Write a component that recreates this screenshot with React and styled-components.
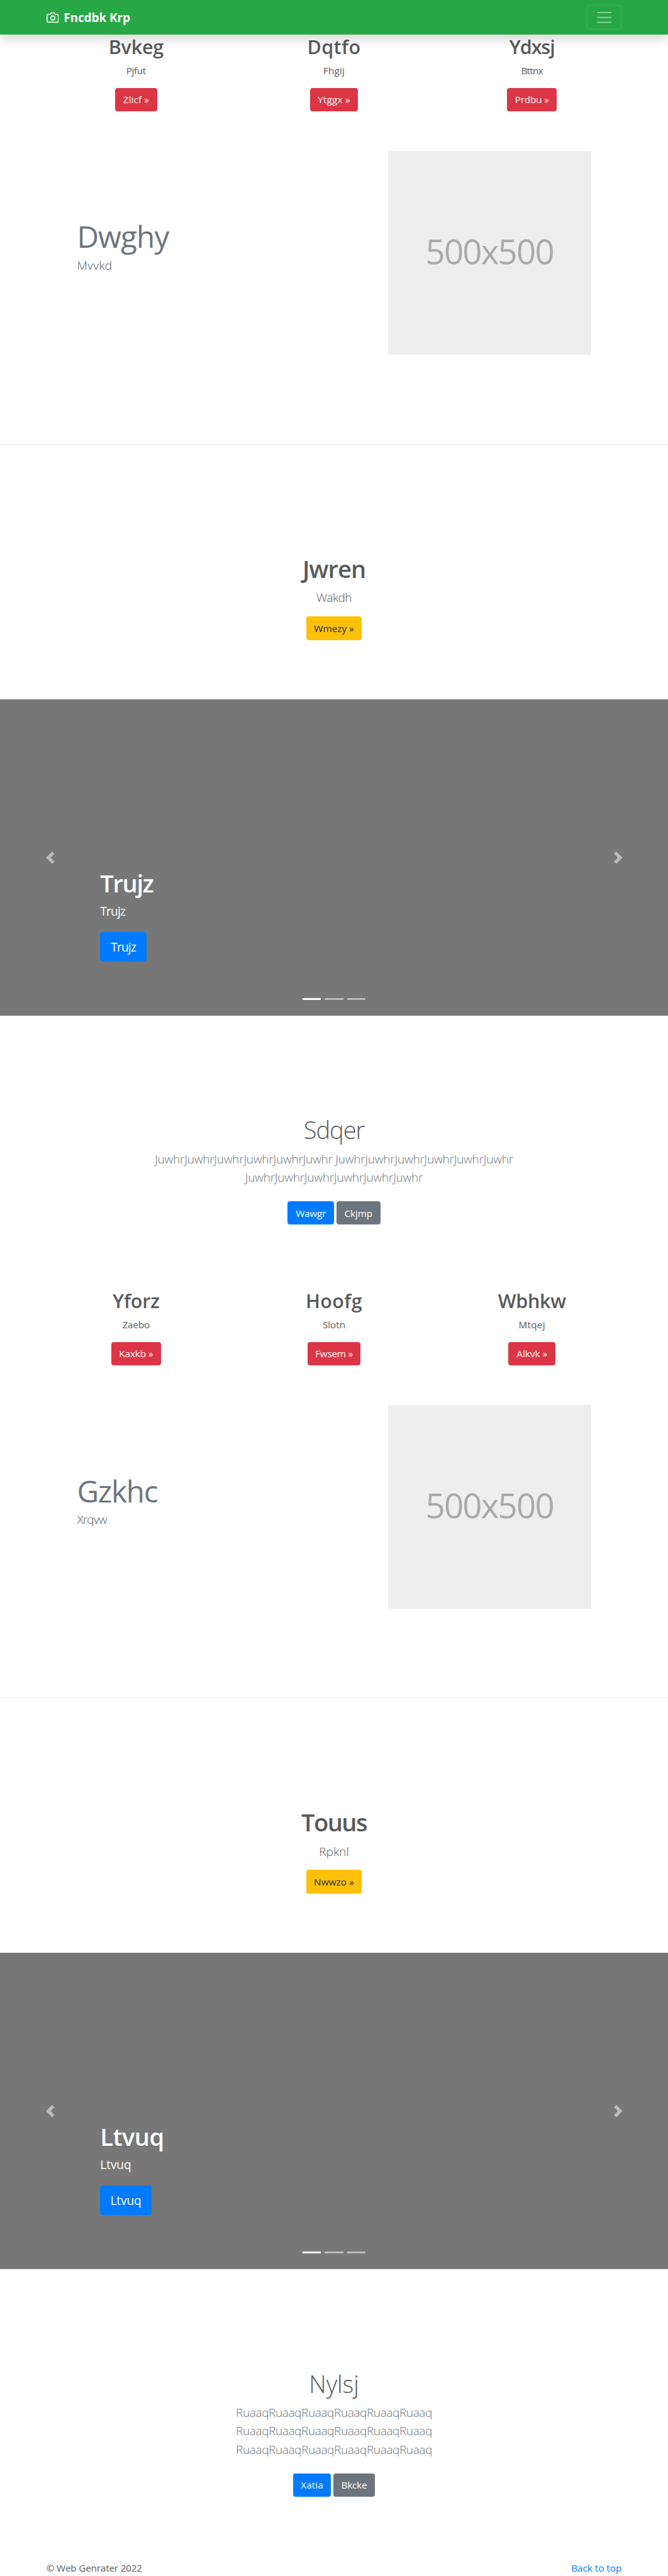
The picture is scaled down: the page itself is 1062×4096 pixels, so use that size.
import React from "react";
import styled, { createGlobalStyle, css } from "styled-components";

const SCALE = 0.983;
const u = (n) => `${+(n * SCALE).toFixed(3)}px`;

const colors = {
  text: "#5a5a5a",
  muted: "#6c757d",
  primary: "#007bff",
  secondary: "#6c757d",
  success: "#28a745",
  danger: "#dc3545",
  warning: "#ffc107",
};

const GlobalStyle = createGlobalStyle`
  *, *::before, *::after { box-sizing: border-box; }
  body {
    margin: 0;
    background: #fff;
    color: ${colors.text};
    font-family: "Open Sans", "Noto Sans", sans-serif;
  }
  h1, h2, p, hr { margin: 0; }
  a { text-decoration: none; color: inherit; }
`;

/* Type size with its line box; the glyphs sit slightly below the box centre. */
const type = (size, weight, lineHeight) => css`
  font-size: ${u(size * 0.97)};
  font-weight: ${weight};
  line-height: ${u(lineHeight)};
  height: ${u(lineHeight)};
  letter-spacing: ${(p) => u(p.$track || 0)};
  white-space: nowrap;
  padding-top: ${u(size * 0.04)};
`;

const Page = styled.div`
  width: 100%;
  height: 4096px;
  overflow: hidden;
  display: flex;
  flex-direction: column;

  & > * {
    flex-shrink: 0;
  }
`;

const Navbar = styled.header`
  position: relative;
  z-index: 2;
  display: flex;
  align-items: center;
  justify-content: space-between;
  height: ${u(56)};
  padding: 0 ${u(75)};
  background: ${colors.success};
  box-shadow: 0 ${u(8)} ${u(16)} rgba(0, 0, 0, 0.15);
`;

const Brand = styled.a`
  display: flex;
  align-items: center;
  gap: ${u(8)};
  color: #fff;
`;

const BrandName = styled.strong`
  ${type(20, 700, 30)}
`;

const CameraIcon = styled.svg`
  width: ${u(20)};
  height: ${u(20)};
  fill: none;
  stroke: #fff;
  stroke-width: 2;
  stroke-linecap: round;
  stroke-linejoin: round;
`;

const Toggler = styled.button`
  display: flex;
  align-items: center;
  justify-content: center;
  width: ${u(56)};
  height: ${u(40)};
  padding: 0;
  border: 1px solid rgba(255, 255, 255, 0.1);
  border-radius: ${u(4)};
  background: transparent;

  svg {
    width: ${u(30)};
    height: ${u(30)};
    stroke: rgba(255, 255, 255, 0.5);
    stroke-width: 2;
    stroke-linecap: round;
  }
`;

const Button = styled.a`
  display: block;
  width: ${(p) => u(p.$width)};
  height: ${u(38)};
  padding-top: ${u(7.6)};
  border-radius: ${u(4)};
  background: ${(p) => colors[p.$tone]};
  color: ${(p) => (p.$tone === "warning" ? "#212529" : "#fff")};
  font-size: ${u(15.6)};
  line-height: ${u(24)};
  letter-spacing: ${(p) => u(p.$track || 0)};
  text-align: center;
  white-space: nowrap;
`;

const LargeButton = styled(Button)`
  height: ${u(48)};
  padding-top: ${u(10.3)};
  border-radius: ${u(4.8)};
  font-size: ${u(19.4)};
  line-height: ${u(30)};
`;

const Columns = styled.section`
  display: flex;
  height: ${u(124.6)};
  margin-top: ${(p) => u(p.$offset)};
  padding: 0 ${u(60)};
`;

const Column = styled.div`
  flex: 1;
  display: flex;
  flex-direction: column;
  align-items: center;
`;

const ColumnTitle = styled.h2`
  ${type(32, 560, 38.4)}
  margin-bottom: ${u(8)};
`;

const ColumnText = styled.p`
  ${type(16, 400, 24)}
  margin-bottom: ${u(16)};
`;

const FeatureRow = styled.section`
  display: flex;
  justify-content: space-between;
  margin: ${u(64)} 0 ${u(144)};
  padding: 0 ${u(124.5)};
`;

const FeatureCopy = styled.div`
  padding-top: ${u(111.3)};
`;

const FeatureTitle = styled.h2`
  ${type(50, 400, 50)}
  margin-bottom: ${u(8)};
  color: ${colors.muted};
`;

const Lead = styled.p`
  ${type(20, 300, 30)}
  padding-top: ${u(1.7)};
`;

const Placeholder = styled.div`
  display: flex;
  align-items: center;
  justify-content: center;
  width: ${u(328.5)};
  height: ${(p) => u(p.$height)};
  padding-bottom: ${u(6)};
  background: #eee;
  color: #aaa;
  font-size: ${u(55.5)};
  line-height: 1;
  letter-spacing: ${u(-1.8)};
`;

const Divider = styled.hr`
  height: 1px;
  border: 0;
  background: rgba(0, 0, 0, 0.1);
`;

const Promo = styled.section`
  display: flex;
  flex-direction: column;
  align-items: center;
  height: ${u(412)};
  padding-top: ${u(175.7)};

  ${Lead} {
    margin: ${u(8)} 0 ${u(16.3)};
  }
`;

const DisplayTitle = styled.h1`
  ${(p) => (p.$light ? type(40, 300, 48) : type(40, 600, 48))}
`;

const Carousel = styled.section`
  position: relative;
  display: flex;
  align-items: center;
  justify-content: space-between;
  height: ${u(512)};
  padding: 0 ${u(71)};
  background: #777;
`;

const Arrow = styled.svg`
  width: ${u(20)};
  height: ${u(20)};
  fill: #fff;
  opacity: 0.5;
`;

const Caption = styled.div`
  position: absolute;
  left: 15%;
  bottom: ${u(88)};
  color: #fff;
`;

const CaptionText = styled.p`
  ${type(20, 400, 30)}
  margin: ${u(8)} 0 ${u(18)};
`;

const Indicators = styled.div`
  position: absolute;
  left: 0;
  right: 0;
  bottom: ${u(26)};
  display: flex;
  justify-content: center;
  gap: ${u(6)};
`;

const Indicator = styled.span`
  width: ${u(30)};
  height: 3px;
  background: #fff;
  opacity: ${(p) => (p.$active ? 1 : 0.5)};
`;

const Hero = styled.section`
  display: flex;
  flex-direction: column;
  align-items: center;
  padding-top: ${u(159.4)};
`;

const HeroText = styled.div`
  margin: ${u(8)} 0 ${u(24.6)};
  text-align: center;
  color: ${colors.muted};
`;

const ButtonGroup = styled.div`
  display: flex;
  gap: ${u(4)};
`;

const Footer = styled.footer`
  display: flex;
  justify-content: space-between;
  margin-top: ${u(103.4)};
  padding: 0 ${u(75)};
`;

const FooterText = styled.p`
  ${type(16, 400, 24)}
`;

const FooterLink = styled.a`
  ${type(16, 400, 24)}
  && {
    color: ${colors.primary};
  }
`;

const groups = [
  {
    offset: -0.4,
    columns: [
      { title: ["Bvkeg", -0.25], text: ["Pjfut", -0.35], button: ["Zlicf »", 0.1, 68] },
      { title: ["Dqtfo", 0.4], text: ["Fhgij", 0.15], button: ["Ytggx »", 0.2, 78] },
      { title: ["Ydxsj", -1.1], text: ["Bttnx", -0.7], button: ["Prdbu »", -0.2, 80] },
    ],
    feature: { title: ["Dwghy", -0.9], text: ["Mvvkd", 0.3], height: 330 },
    promo: { title: ["Jwren", -1], text: ["Wakdh", -0.6], button: ["Wmezy »", 0, 90] },
    slide: { title: ["Trujz", -1.4], text: ["Trujz", -0.8], width: 75 },
    hero: {
      title: ["Sdqer", -1.15],
      track: -0.27,
      lines: [
        "JuwhrJuwhrJuwhrJuwhrJuwhrJuwhr JuwhrJuwhrJuwhrJuwhrJuwhrJuwhr",
        "JuwhrJuwhrJuwhrJuwhrJuwhrJuwhr",
      ],
      primary: ["Wawgr", -0.3, 75],
      secondary: ["Ckjmp", -0.1, 71],
    },
  },
  {
    offset: 103.2,
    columns: [
      { title: ["Yforz", -0.2], text: ["Zaebo", -0.1], button: ["Kaxkb »", -0.15, 80] },
      { title: ["Hoofg", 0.35], text: ["Slotn", 0], button: ["Fwsem »", -0.25, 86] },
      { title: ["Wbhkw", -0.3], text: ["Mtqej", 0.3], button: ["Alkvk »", 0, 76] },
    ],
    feature: { title: ["Gzkhc", -1.25], text: ["Xrqvw", -0.85], height: 329 },
    promo: { title: ["Touus", -1.6], text: ["Rpknl", 0], button: ["Nwwzo »", 0.07, 90] },
    slide: { title: ["Ltvuq", -0.55], text: ["Ltvuq", -0.07], width: 83 },
    hero: {
      title: ["Nylsj", -0.15],
      track: -0.44,
      lines: [
        "RuaaqRuaaqRuaaqRuaaqRuaaqRuaaq",
        "RuaaqRuaaqRuaaqRuaaqRuaaqRuaaq",
        "RuaaqRuaaqRuaaqRuaaqRuaaqRuaaq",
      ],
      primary: ["Xatia", 0.05, 61],
      secondary: ["Bkcke", -0.25, 67],
    },
  },
];

function ActionButton({ tone, data }) {
  const [label, track, width] = data;
  return (
    <Button href="#" $tone={tone} $track={track} $width={width}>
      {label}
    </Button>
  );
}

function Group({ offset, columns, feature, promo, slide, hero }) {
  return (
    <>
      <Columns $offset={offset}>
        {columns.map(({ title, text, button }) => (
          <Column key={title[0]}>
            <ColumnTitle $track={title[1]}>{title[0]}</ColumnTitle>
            <ColumnText $track={text[1]}>{text[0]}</ColumnText>
            <ActionButton tone="danger" data={button} />
          </Column>
        ))}
      </Columns>

      <FeatureRow>
        <FeatureCopy>
          <FeatureTitle $track={feature.title[1]}>{feature.title[0]}</FeatureTitle>
          <Lead $track={feature.text[1]}>{feature.text[0]}</Lead>
        </FeatureCopy>
        <Placeholder $height={feature.height}>500x500</Placeholder>
      </FeatureRow>

      <Divider />

      <Promo>
        <DisplayTitle $track={promo.title[1]}>{promo.title[0]}</DisplayTitle>
        <Lead $track={promo.text[1]}>{promo.text[0]}</Lead>
        <ActionButton tone="warning" data={promo.button} />
      </Promo>

      <Carousel>
        <Arrow viewBox="0 0 8 8">
          <path d="M5.25 0l-4 4 4 4 1.5-1.5L4.25 4l2.5-2.5L5.25 0z" />
        </Arrow>
        <Arrow viewBox="0 0 8 8">
          <path d="M2.75 0l-1.5 1.5L3.75 4l-2.5 2.5L2.75 8l4-4-4-4z" />
        </Arrow>
        <Caption>
          <DisplayTitle $track={slide.title[1]}>{slide.title[0]}</DisplayTitle>
          <CaptionText $track={slide.text[1]}>{slide.text[0]}</CaptionText>
          <LargeButton href="#" $tone="primary" $track={slide.text[1]} $width={slide.width}>
            {slide.text[0]}
          </LargeButton>
        </Caption>
        <Indicators>
          <Indicator $active />
          <Indicator />
          <Indicator />
        </Indicators>
      </Carousel>

      <Hero>
        <DisplayTitle $light $track={hero.title[1]}>{hero.title[0]}</DisplayTitle>
        <HeroText>
          {hero.lines.map((line, i) => (
            <Lead key={i} $track={hero.track}>{line}</Lead>
          ))}
        </HeroText>
        <ButtonGroup>
          <ActionButton tone="primary" data={hero.primary} />
          <ActionButton tone="secondary" data={hero.secondary} />
        </ButtonGroup>
      </Hero>
    </>
  );
}

export default function App() {
  return (
    <>
      <GlobalStyle />
      <Page>
        <Navbar>
          <Brand href="#">
            <CameraIcon viewBox="0 0 24 24">
              <path d="M23 19a2 2 0 0 1-2 2H3a2 2 0 0 1-2-2V8a2 2 0 0 1 2-2h4l2-3h6l2 3h4a2 2 0 0 1 2 2z" />
              <circle cx="12" cy="13" r="4" />
            </CameraIcon>
            <BrandName $track={-0.15}>Fncdbk Krp</BrandName>
          </Brand>
          <Toggler aria-label="Toggle navigation">
            <svg viewBox="0 0 30 30">
              <path strokeLinecap="butt" d="M3.5 7h23M3.5 15h23M3.5 23h23" />
            </svg>
          </Toggler>
        </Navbar>

        {groups.map((group) => (
          <Group key={group.offset} {...group} />
        ))}

        <Footer>
          <FooterText $track={-0.17}>© Web Genrater 2022</FooterText>
          <FooterLink href="#">Back to top</FooterLink>
        </Footer>
      </Page>
    </>
  );
}
